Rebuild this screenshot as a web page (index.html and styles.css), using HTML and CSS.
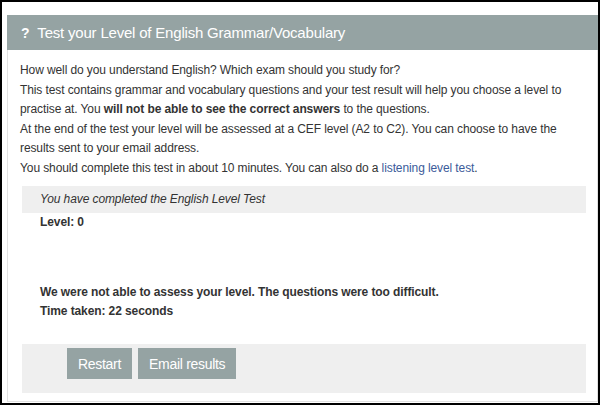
FILE: index.html
```html
<!DOCTYPE html>
<html lang="en">
<head>
    <meta charset="UTF-8">
    <title>English Level Test</title>
    <link rel="stylesheet" href="styles.css">
</head>
<body>
    <div class="frame">
        <div class="panel">
            <div class="panel-head">
                <span class="qmark">?</span>
                <span>Test your Level of English Grammar/Vocabulary</span>
            </div>
            <div class="panel-body">
                <p class="intro">
                    How well do you understand English? Which exam should you study for?<br />
                    This test contains grammar and vocabulary questions and your test result will help you choose a level to practise at. You <b>will not be able to see the correct answers</b> to the questions.<br />
                    At the end of the test your level will be assessed at a CEF level (A2 to C2). You can choose to have the results sent to your email address.<br />
                    You should complete this test in about 10 minutes. You can also do a <a href="#">listening level test</a>.
                </p>

                <div class="result">
                    <div class="done">You have completed the English Level Test</div>
                    <div class="level">Level: 0</div>
                    <div class="summary">
                        <div>We were not able to assess your level. The questions were too difficult.</div>
                        <div>Time taken: 22 seconds</div>
                    </div>
                    <div class="btns">
                        <input type="button" class="btn" value="Restart" />
                        <input type="button" class="btn" value="Email results" />
                    </div>
                </div>
            </div>
        </div>
    </div>
</body>
</html>
```

FILE: styles.css
```css
html, body {
    margin: 0;
    padding: 0;
    background: #fff;
}
.frame {
    width: 600px;
    height: 405px;
    box-sizing: border-box;
    border: 2px solid #000;
    padding: 13px 0 0 5px;
    overflow: hidden;
    font-family: "Liberation Sans", Arial, sans-serif;
    color: #333;
}
.panel {
    border: 1px solid #e2e2e2;
    border-top: none;
    height: 387px;
    box-sizing: border-box;
}
.panel-head {
    background: #95a3a3;
    color: #fff;
    height: 35px;
    display: flex;
    align-items: center;
    padding-left: 14px;
    font-size: 15px;
    letter-spacing: -0.2px;
    margin-left: -1px;
    margin-right: -1px;
}
.qmark {
    font-weight: bold;
    font-size: 14px;
    margin-right: 8px;
}
.panel-body {
    padding: 11px 12px 0 12px;
}
.intro {
    margin: 0;
    font-size: 12px;
    letter-spacing: -0.1px;
    line-height: 19.5px;
}
.intro a {
    color: #3b5b9a;
    text-decoration: none;
}
.result {
    margin: 8px 0 0 2px;
    width: 564px;
    font-size: 12px;
    letter-spacing: -0.1px;
}
.done {
    background: #efefef;
    font-style: italic;
    height: 27px;
    line-height: 26px;
    padding-left: 18px;
}
.level {
    font-weight: bold;
    padding-left: 18px;
    line-height: 19px;
}
.summary {
    font-weight: bold;
    padding-left: 18px;
    margin-top: 51px;
    line-height: 18.5px;
}
.btns {
    background: #efefef;
    margin-top: 24px;
    padding: 4px 0 14px 45px;
    display: flex;
    gap: 6px;
}
.btn {
    background: #95a3a3;
    color: #fff;
    border: none;
    height: 31px;
    padding: 0 11px;
    font-family: "Liberation Sans", Arial, sans-serif;
    font-size: 14px;
    letter-spacing: -0.3px;
}
```
